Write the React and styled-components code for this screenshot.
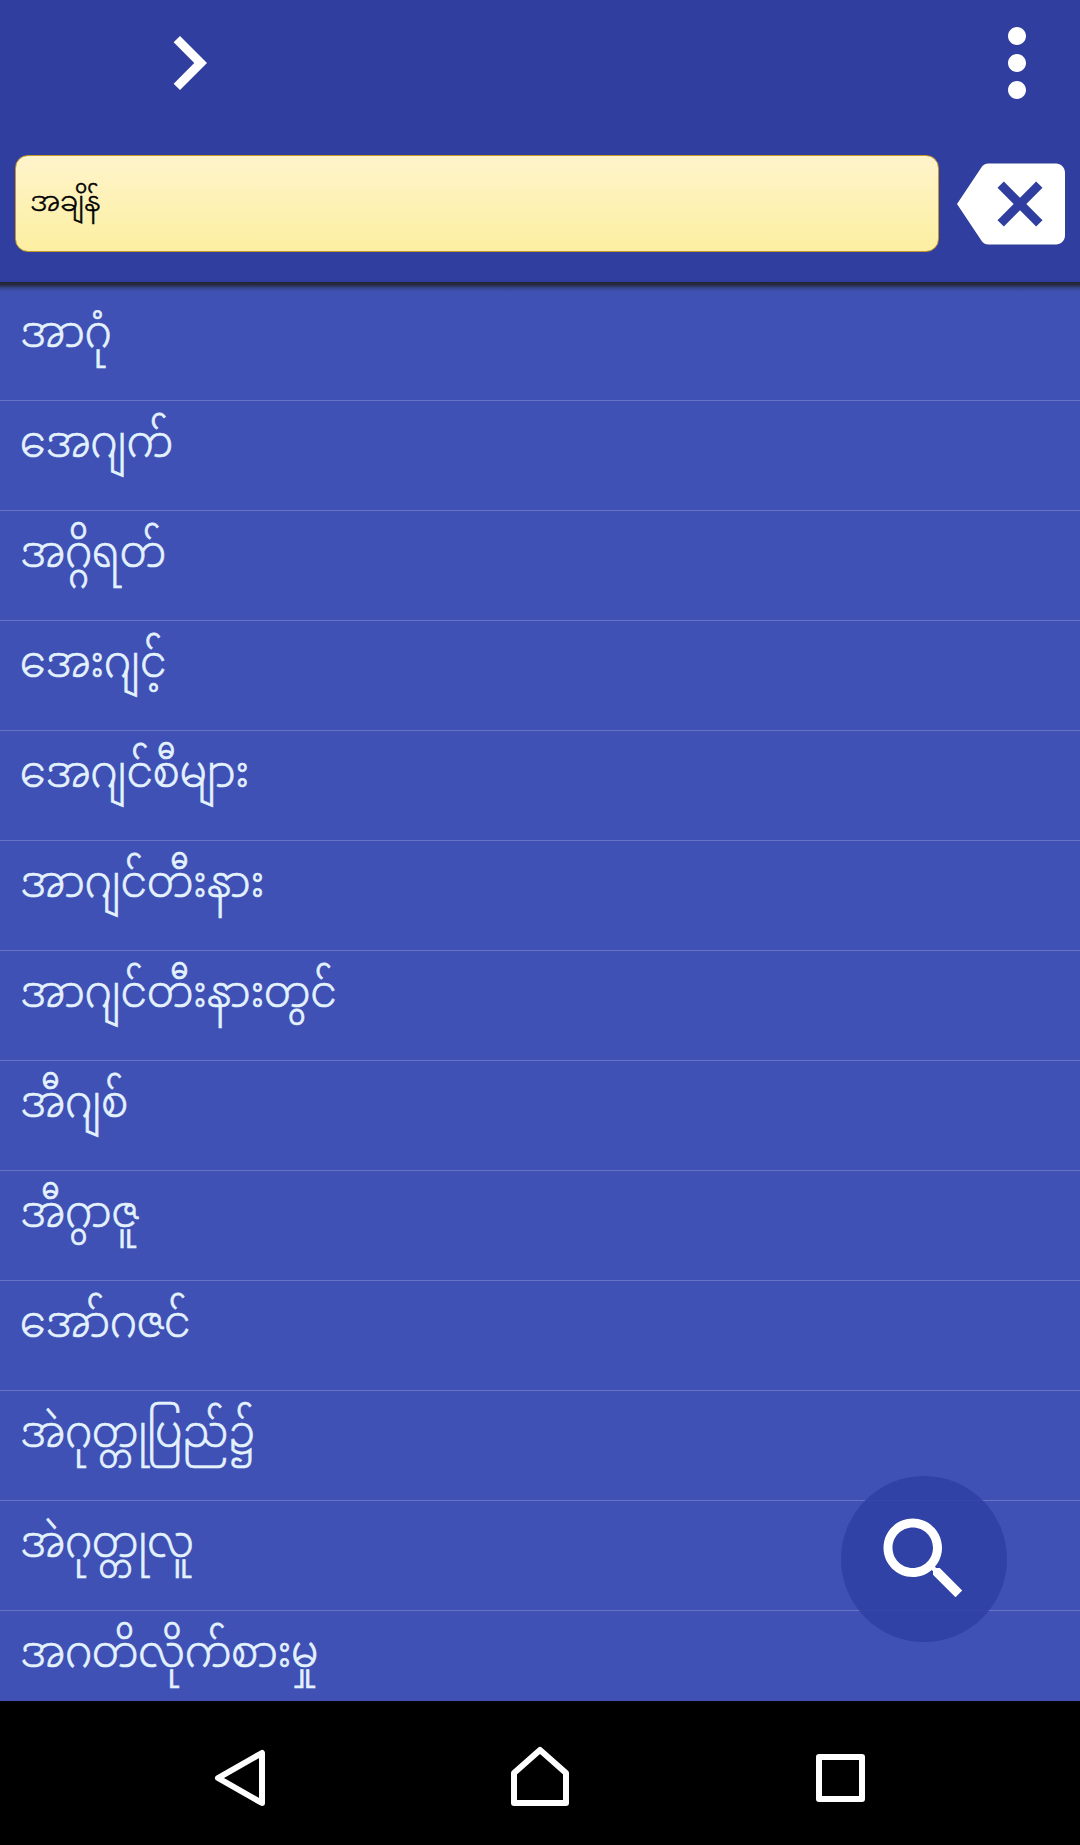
import React, { Component } from "react";
import styled, { createGlobalStyle } from "styled-components";

const myanmarFonts = `"Noto Sans Myanmar", Padauk, "Noto Sans", sans-serif`;

const words = [
    "အာဂုံ",
    "အေဂျက်",
    "အဂ္ဂိရတ်",
    "အေးဂျင့်",
    "အေဂျင်စီများ",
    "အာဂျင်တီးနား",
    "အာဂျင်တီးနားတွင်",
    "အီဂျစ်",
    "အီဂွာဇူ",
    "အော်ဂဇင်",
    "အဲဂုတ္တုပြည်၌",
    "အဲဂုတ္တုလူ",
    "အဂတိလိုက်စားမှု",
];

const GlobalStyle = createGlobalStyle`
  body {
    margin: 0;
    background: #000;
  }
  * {
    box-sizing: border-box;
  }
`;

const Screen = styled.div`
  display: flex;
  flex-direction: column;
  position: relative;
  width: 1080px;
  height: 1845px;
  overflow: hidden;
  font-family: ${myanmarFonts};
  font-weight: 300;
`;

const Header = styled.header`
  flex: none;
  height: 282px;
  background: #303f9f;
`;

const Toolbar = styled.div`
  display: flex;
  justify-content: space-between;
  padding: 9px 9px 0 135px;
  height: 150px;
`;

const IconButton = styled.button`
  flex: none;
  display: block;
  width: 108px;
  height: 108px;
  padding: 0;
  border: 0;
  background: none;
  color: #fff;

  svg {
    display: block;
  }
`;

const SearchRow = styled.div`
  display: flex;
  justify-content: space-between;
  padding: 0 15px;
`;

const SearchInput = styled.input`
  width: 924px;
  height: 97px;
  margin-top: 5px;
  padding: 2px 14px 0;
  border: 1px solid #c4982a;
  border-radius: 13px;
  outline: none;
  background: linear-gradient(#fff4cb, #fcefa1);
  color: #000;
  font-family: ${myanmarFonts};
  font-size: 27.5px;
  font-weight: 300;
  -webkit-text-stroke: 0.5px;
`;

const WordList = styled.ul`
  flex: none;
  height: 1419px;
  margin: 0;
  padding: 9px 0 0;
  list-style: none;
  background: linear-gradient(#20232f, #282c45 3px, #36458f 6px, #3f51b5 10px) no-repeat 0 0 / 100% 10px, #3f51b5;
`;

const Word = styled.li`
  height: 110px;
  padding: 9px 0 0 20px;
  border-bottom: 1px solid #6574c5;
  color: #e3f2fd;
  font-size: 44px;
  line-height: 75px;
  white-space: nowrap;

  &:last-child {
    height: 90px;
    border-bottom: 0;
  }
`;

/* narrower letters, same height */
const WordText = styled.span`
  display: inline-block;
  transform: scaleX(0.938);
  transform-origin: 0 50%;
  -webkit-text-stroke: 0.7px;
`;

const SearchFab = styled.button`
  position: absolute;
  right: 73px;
  bottom: 203px;
  display: flex;
  align-items: center;
  justify-content: center;
  width: 166px;
  height: 166px;
  padding: 0;
  border: 0;
  border-radius: 50%;
  background: rgba(46, 63, 163, 0.85);
  color: #fff;
`;

const NavBar = styled.nav`
  flex: none;
  height: 144px;
  background: #000;

  svg {
    display: block;
  }
`;

const Icon = ({ d }) => (
    <svg width="108" height="108" viewBox="0 0 24 24" fill="currentColor">
        <path d={d} />
    </svg>
);

const chevron = "M10 6L8.59 7.41 13.17 12l-4.58 4.59L10 18l6-6z";
const more = "M12 8c1.1 0 2-.9 2-2s-.9-2-2-2-2 .9-2 2 .9 2 2 2zm0 2c-1.1 0-2 .9-2 2s.9 2 2 2 2-.9 2-2-.9-2-2-2zm0 6c-1.1 0-2 .9-2 2s.9 2 2 2 2-.9 2-2-.9-2-2-2z";
const backspace = "M22 3H7c-.69 0-1.23.35-1.59.88L0 12l5.41 8.11c.36.53.9.89 1.59.89h15c1.1 0 2-.9 2-2V5c0-1.1-.9-2-2-2zm-3 12.59L17.59 17 14 13.41 10.41 17 9 15.59 12.59 12 9 8.41 10.41 7 14 10.59 17.59 7 19 8.41 15.41 12 19 15.59z";
const search = "M15.5 14h-.79l-.28-.27C15.41 12.59 16 11.11 16 9.5 16 5.91 13.09 3 9.5 3S3 5.91 3 9.5 5.91 16 9.5 16c1.61 0 3.09-.59 4.23-1.57l.27.28v.79l5 4.99L20.49 19l-4.99-5zm-6 0C7.01 14 5 11.99 5 9.5S7.01 5 9.5 5 14 7.01 14 9.5 11.99 14 9.5 14z";

class App extends Component {
    constructor(props) {
        super(props);
        this.state = { query: "အချိန်" };
        this.handleChange = this.handleChange.bind(this);
        this.handleClear = this.handleClear.bind(this);
    }

    handleChange(event) {
        this.setState({ query: event.target.value });
    }

    handleClear() {
        this.setState({ query: "" });
    }

    render() {
        return (
            <Screen>
                <GlobalStyle />
                <Header>
                    <Toolbar>
                        <IconButton><Icon d={chevron} /></IconButton>
                        <IconButton><Icon d={more} /></IconButton>
                    </Toolbar>
                    <SearchRow>
                        <SearchInput value={this.state.query} onChange={this.handleChange} />
                        <IconButton onClick={this.handleClear}><Icon d={backspace} /></IconButton>
                    </SearchRow>
                </Header>
                <WordList>
                    {words.map(word => (
                        <Word key={word}><WordText>{word}</WordText></Word>
                    ))}
                </WordList>
                <SearchFab><Icon d={search} /></SearchFab>
                <NavBar>
                    <svg width="1080" height="144" fill="none" stroke="#fff" strokeWidth="6" strokeLinejoin="round">
                        <path d="M218 77L262 52V102z" />
                        <path d="M540 49L566 72V102H514V72z" />
                        <path d="M819 56H862V98H819z" />
                    </svg>
                </NavBar>
            </Screen>
        );
    }
}

export default App;
